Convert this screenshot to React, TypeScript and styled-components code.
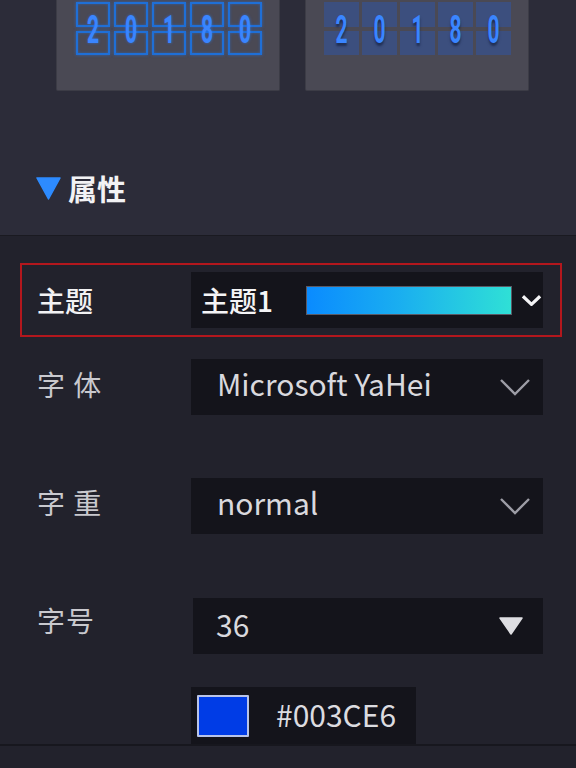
import React from "react";
import styled, { createGlobalStyle } from "styled-components";

const GlobalStyle = createGlobalStyle`
  html, body { margin: 0; padding: 0; background: #22222c; }
  body { font-family: "Noto Sans CJK SC", "Noto Sans", sans-serif; }
  * { box-sizing: border-box; }
`;

const Page = styled.div`
  width: 576px;
  height: 768px;
  overflow: hidden;
  display: flex;
  flex-direction: column;
  background: #22222c;
`;

const TopSection = styled.div`
  height: 235px;
  background: #2c2c39;
  display: flex;
  flex-direction: column;
`;

const PreviewRow = styled.div`
  display: flex;
  gap: 25px;
  padding-left: 56px;
`;

const PreviewCard = styled.div<{ $pad: number }>`
  width: 224px;
  height: 91px;
  background: #4a4954;
  border: 1px solid #3c3c46;
  border-top: none;
  border-radius: 0 0 2px 2px;
  padding: 2px 0 0 ${(p) => p.$pad}px;
`;

const DigitRow = styled.div<{ $gap: number }>`
  display: flex;
  gap: ${(p) => p.$gap}px;
`;

const DigitCell = styled.div<{ $w: number }>`
  position: relative;
  width: ${(p) => p.$w}px;
  display: flex;
  flex-direction: column;
  gap: 4px;
`;

const Half = styled.div<{ $h: number; $variant: "outline" | "filled" }>`
  height: ${(p) => p.$h}px;
  ${(p) =>
    p.$variant === "outline"
      ? `border: 2px solid #1f6fd6;
         box-shadow: 0 0 3px rgba(30, 120, 255, 0.55), inset 0 0 3px rgba(30, 120, 255, 0.45);`
      : `background: #3c4f7e;`}
`;

const Digit = styled.span<{ $variant: "outline" | "filled" }>`
  position: absolute;
  left: 0;
  right: 0;
  top: 0;
  height: 56px;
  display: flex;
  align-items: center;
  justify-content: center;
  font-family: Roboto, "Liberation Sans", sans-serif;
  font-weight: 700;
  font-size: 39px;
  line-height: 1;
  color: #3a85ff;
  transform: scaleX(0.54);
  text-shadow: ${(p) =>
    p.$variant === "outline"
      ? "0 0 4px rgba(40, 120, 255, 0.7)"
      : "0 3px 3px rgba(10, 20, 50, 0.55)"};
`;

const SectionHeader = styled.div`
  display: flex;
  align-items: center;
  gap: 7px;
  margin-top: 80px;
  padding-left: 36px;
  height: 34px;
`;

const HeaderTitle = styled.span`
  font-size: 29px;
  font-weight: 700;
  color: #f2f2f4;
  line-height: 34px;
`;

const Divider = styled.div<{ $h: number; $color: string }>`
  height: ${(p) => p.$h}px;
  background: ${(p) => p.$color};
  flex-shrink: 0;
`;

const Form = styled.div`
  display: flex;
  flex-direction: column;
  padding: 0 14px 0 20px;
`;

const FieldRow = styled.div<{ $highlight?: boolean; $mt: number }>`
  display: grid;
  grid-template-columns: 154px auto;
  align-items: center;
  margin-top: ${(p) => p.$mt}px;
  padding: 7px 17px 7px 15px;
  border: 2px solid ${(p) => (p.$highlight ? "#b3171d" : "transparent")};

  &:last-child {
    padding-bottom: 0;
    border-bottom: none;
  }
`;

const Label = styled.span<{ $strong?: boolean; $raise?: number }>`
  font-size: 28px;
  line-height: 34px;
  color: ${(p) => (p.$strong ? "#f2f2f4" : "#c9c9ce")};
  font-weight: ${(p) => (p.$strong ? 500 : 400)};
  letter-spacing: ${(p) => (p.$strong ? "0" : "1px")};
  margin-bottom: ${(p) => p.$raise ?? 0}px;
  white-space: pre;
`;

const Select = styled.div<{ $w: number; $pl: number; $pr: number; $ml?: number }>`
  width: ${(p) => p.$w}px;
  height: 56px;
  margin-left: ${(p) => p.$ml ?? 0}px;
  background: #14141b;
  display: flex;
  align-items: center;
  padding-left: ${(p) => p.$pl}px;
  padding-right: ${(p) => p.$pr}px;
`;

const SelectText = styled.span<{ $strong?: boolean; $lift?: number }>`
  flex: 1;
  font-size: ${(p) => (p.$strong ? 28 : 30)}px;
  font-weight: ${(p) => (p.$strong ? 500 : 400)};
  color: ${(p) => (p.$strong ? "#f4f4f6" : "#d9d9de")};
  line-height: 40px;
  margin-bottom: ${(p) => p.$lift ?? 0}px;
  white-space: nowrap;
`;

const ThemeText = styled(SelectText)`
  flex: 0 0 auto;
  width: 105px;
`;

const GradientBar = styled.div`
  flex: 0 0 auto;
  width: 206px;
  height: 29px;
  border: 1px solid #5a5a66;
  background: linear-gradient(90deg, #0a8bff 0%, #1aaef0 45%, #2fe0d6 100%);
  margin-right: 9px;
`;

const ColorBox = styled.div`
  width: 225px;
  height: 57px;
  background: #14141b;
  display: flex;
  align-items: center;
  padding-left: 6px;
  gap: 27px;
`;

const Swatch = styled.div`
  width: 52px;
  height: 42px;
  background: #003ce6;
  border: 2px solid #b9c4e8;
  border-radius: 1px;
`;

const ColorText = styled.span`
  font-size: 30px;
  color: #dcdce0;
  line-height: 40px;
  margin-bottom: 4px;
`;

const Spacer = styled.span``;

const digits = ["2", "0", "1", "8", "0"];

function DigitStrip({ variant }: { variant: "outline" | "filled" }) {
  const w = variant === "outline" ? 34 : 35;
  const gap = variant === "outline" ? 4 : 3;
  return (
    <DigitRow $gap={gap}>
      {digits.map((d, i) => (
        <DigitCell key={i} $w={w}>
          <Half $h={25} $variant={variant} />
          <Half $h={24} $variant={variant} />
          <Digit $variant={variant}>{d}</Digit>
        </DigitCell>
      ))}
    </DigitRow>
  );
}

const ThinChevron = () => (
  <svg width="32" height="18" viewBox="0 0 32 18">
    <polyline points="2,2 16,16 30,2" fill="none" stroke="#9d9da6" strokeWidth="2.4" />
  </svg>
);

const BoldChevron = () => (
  <svg width="22" height="13" viewBox="0 0 22 13">
    <polyline points="2,2 11,10.5 20,2" fill="none" stroke="#f4f4f6" strokeWidth="3.4" strokeLinejoin="round" />
  </svg>
);

const FilledTriangle = ({ color, w, h }: { color: string; w: number; h: number }) => (
  <svg width={w} height={h} viewBox={`0 0 ${w} ${h}`}>
    <polygon points={`1,1 ${w - 1},1 ${w / 2},${h - 1}`} fill={color} stroke={color} strokeWidth="1.5" strokeLinejoin="round" />
  </svg>
);

export default function App() {
  return (
    <>
      <GlobalStyle />
      <Page>
        <TopSection>
          <PreviewRow>
            <PreviewCard $pad={19}>
              <DigitStrip variant="outline" />
            </PreviewCard>
            <PreviewCard $pad={18}>
              <DigitStrip variant="filled" />
            </PreviewCard>
          </PreviewRow>
          <SectionHeader>
            <FilledTriangle color="#2d8bff" w={25} h={23} />
            <HeaderTitle>属性</HeaderTitle>
          </SectionHeader>
        </TopSection>
        <Divider $h={1} $color="#1a1a21" />
        <Form>
          <FieldRow $highlight $mt={27}>
            <Label $strong>主题</Label>
            <Select $w={352} $pl={10} $pr={1}>
              <ThemeText $strong>主题1</ThemeText>
              <GradientBar />
              <BoldChevron />
            </Select>
          </FieldRow>
          <FieldRow $mt={13}>
            <Label $raise={6}>字 体</Label>
            <Select $w={352} $pl={26} $pr={12}>
              <SelectText $lift={8}>Microsoft YaHei</SelectText>
              <ThinChevron />
            </Select>
          </FieldRow>
          <FieldRow $mt={45}>
            <Label $raise={8}>字 重</Label>
            <Select $w={352} $pl={26} $pr={12}>
              <SelectText $lift={8}>normal</SelectText>
              <ThinChevron />
            </Select>
          </FieldRow>
          <FieldRow $mt={46}>
            <Label $raise={12}>字号</Label>
            <Select $w={350} $pl={23} $pr={20} $ml={2}>
              <SelectText $lift={4}>36</SelectText>
              <FilledTriangle color="#dedee2" w={24} h={18} />
            </Select>
          </FieldRow>
          <FieldRow $mt={15}>
            <Spacer />
            <ColorBox>
              <Swatch />
              <ColorText>#003CE6</ColorText>
            </ColorBox>
          </FieldRow>
        </Form>
        <Divider $h={2} $color="#17171e" />
      </Page>
    </>
  );
}
